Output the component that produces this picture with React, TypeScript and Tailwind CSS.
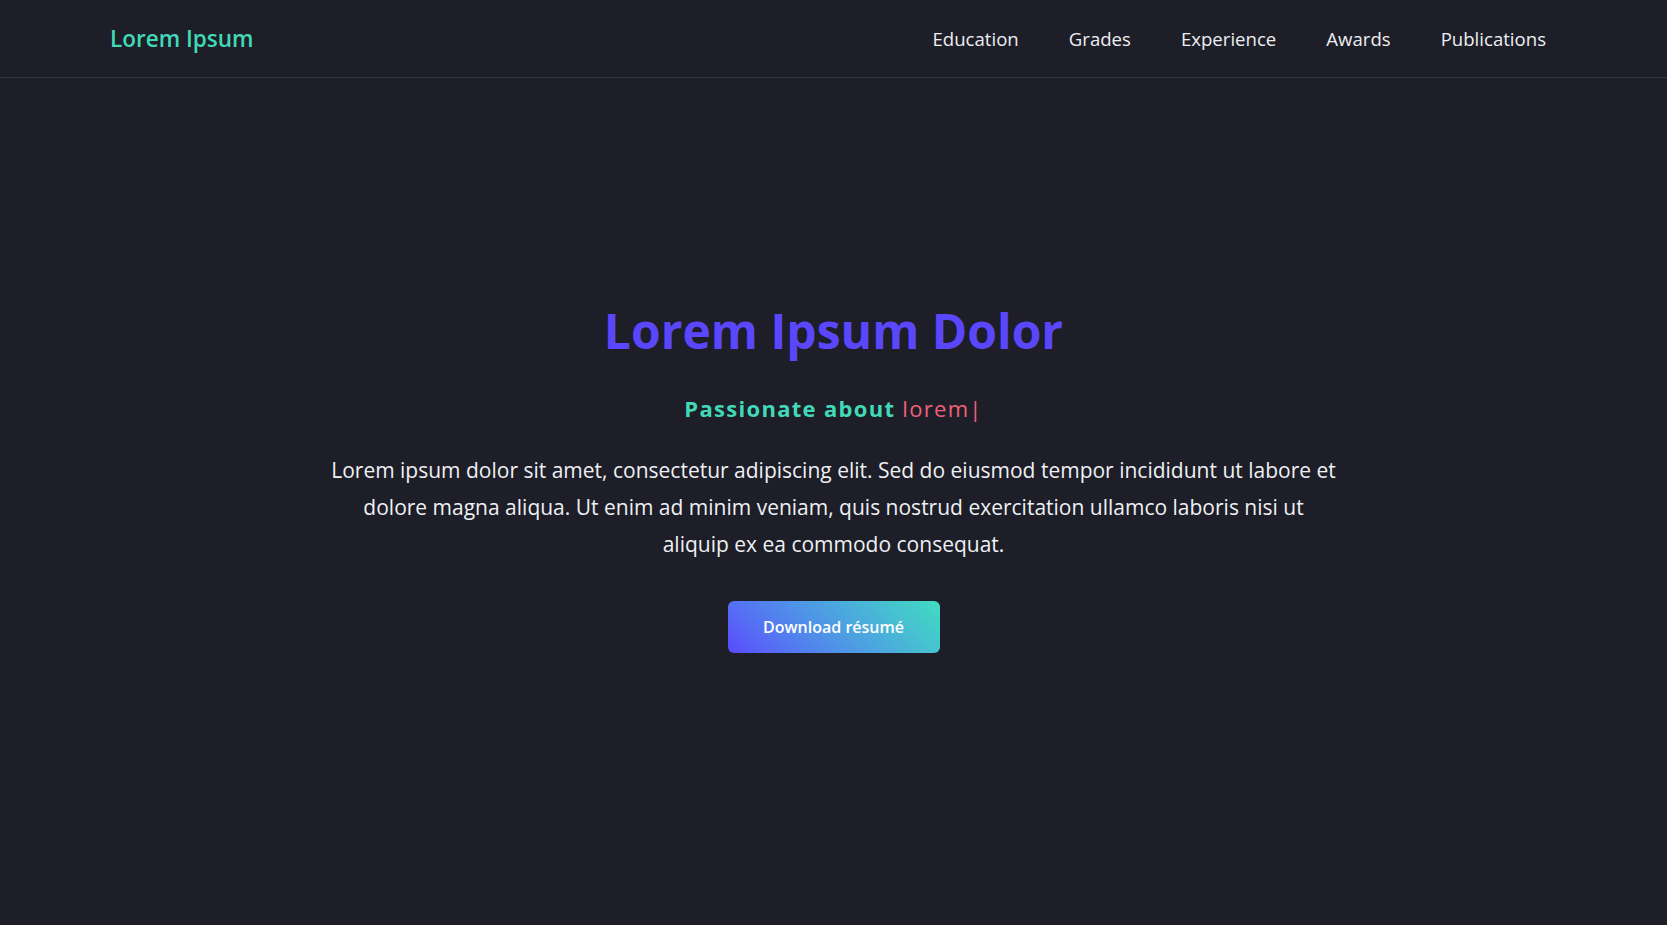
import React from "react";

const NAV_LINKS = ["Education", "Grades", "Experience", "Awards", "Publications"];

export default function App() {
  return (
    <div className="min-h-screen bg-[#1d1e27] font-['Open_Sans',sans-serif] text-white">
      {/* header */}
      <header className="flex h-[78px] items-center justify-between border-b border-[#33343d] pl-[110px] pr-[121px]">
        <a href="#" className="text-[22.5px] font-semibold text-[#41d9b7]">
          Lorem Ipsum
        </a>
        <nav className="flex items-center gap-[50px]">
          {NAV_LINKS.map((link) => (
            <a key={link} href="#" className="text-[18.6px] text-[#eceef2]">
              {link}
            </a>
          ))}
        </nav>
      </header>

      {/* hero */}
      <section className="flex flex-col items-center pt-[217px] text-center">
        <h1 className="text-[48px] font-bold leading-[72px] text-[#5a47fc]">
          Lorem Ipsum Dolor
        </h1>
        <p className="mt-[25px] text-[22px] font-bold tracking-[1.3px] text-[#41d9b7]">
          Passionate about{" "}
          <span className="font-normal text-[#f0607a]">lorem</span>
          <span className="font-normal text-[#f0607a]">|</span>
        </p>
        <p className="mt-[27px] max-w-[1010px] text-[21px] leading-[37px] text-[#eef0f4]">
          Lorem ipsum dolor sit amet, consectetur adipiscing elit. Sed do eiusmod tempor incididunt
          ut labore et dolore magna aliqua. Ut enim ad minim veniam, quis nostrud exercitation
          ullamco laboris nisi ut aliquip ex ea commodo consequat.
        </p>
        <button className="mt-[38px] h-[52px] w-[212px] rounded-[6px] bg-linear-45 from-[#5a47fc] to-[#41dcbf] text-[16px] font-semibold text-white">
          Download résumé
        </button>
      </section>
    </div>
  );
}
